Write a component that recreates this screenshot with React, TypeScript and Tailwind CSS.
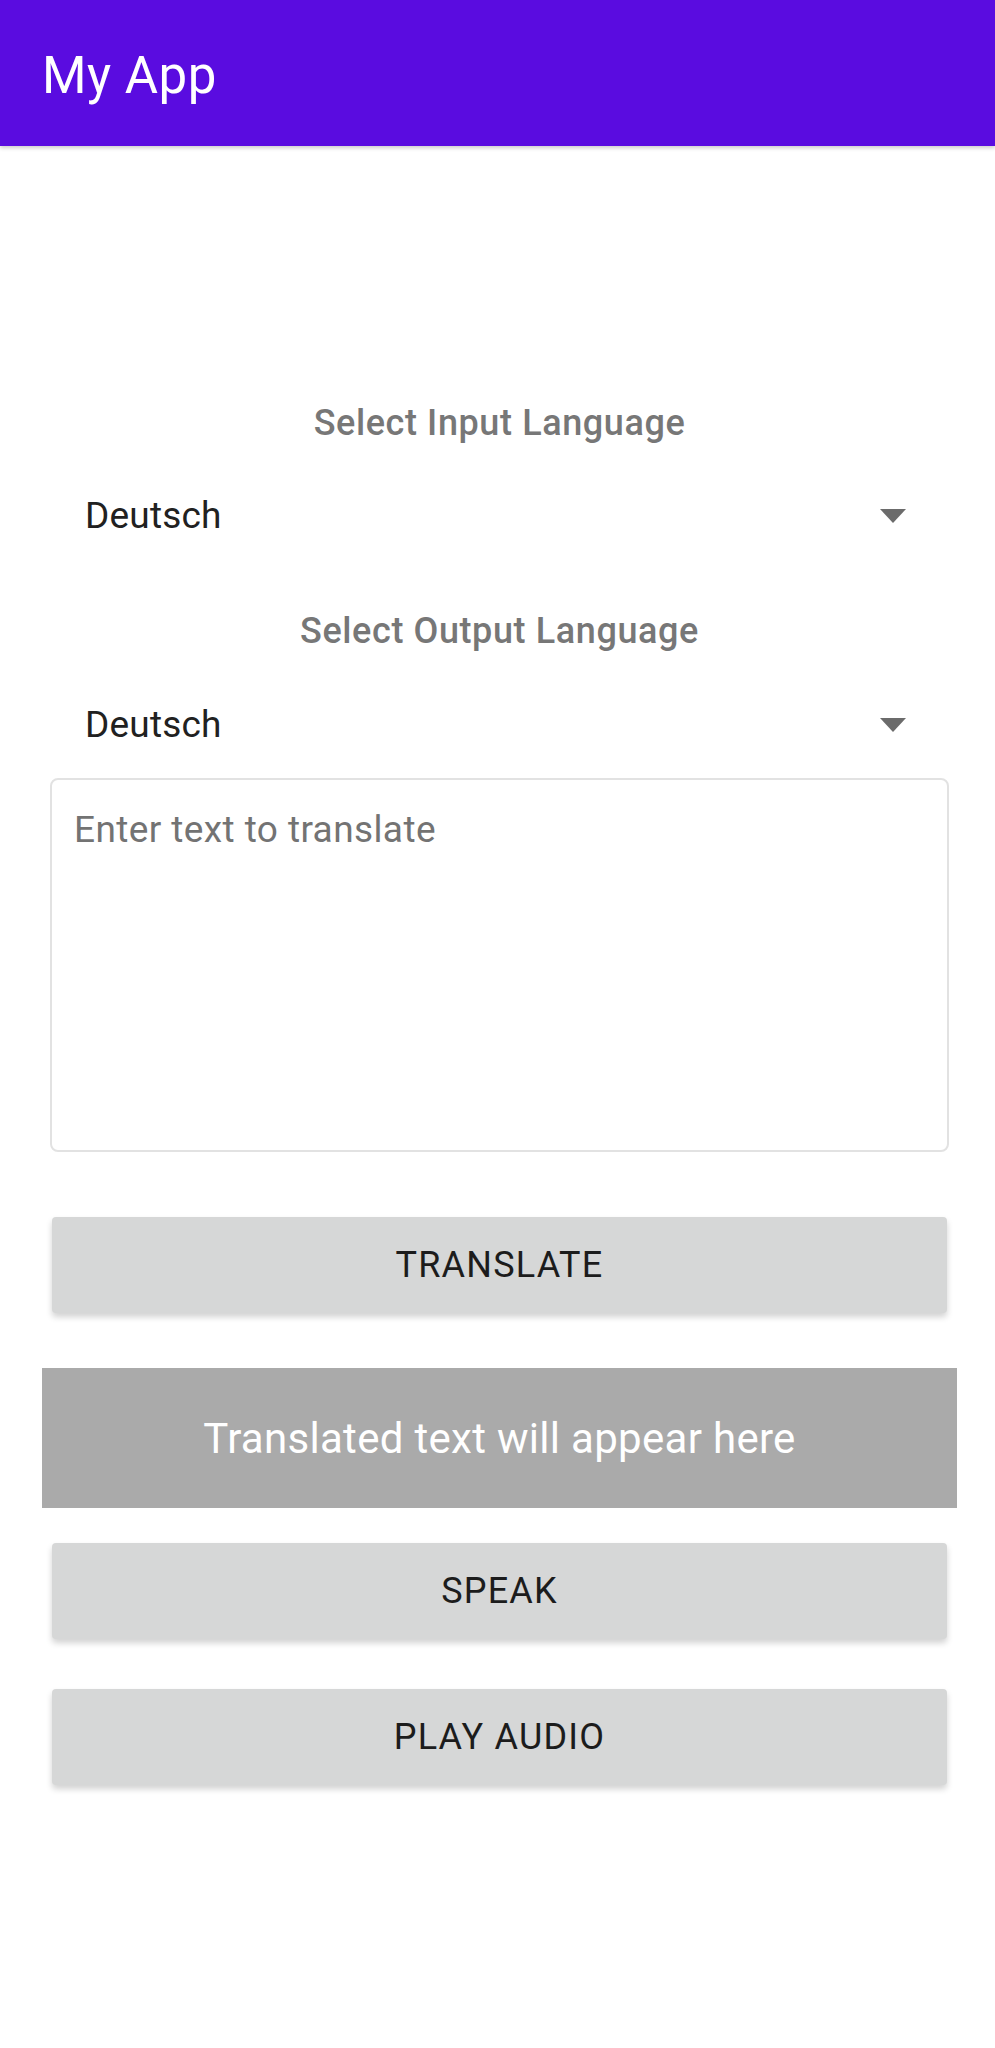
export default function App() {
  const languages = ["Deutsch", "English", "Français", "Español"];

  const LangRow = ({ value }: { value: string }) => (
    <div className="flex h-[70px] items-center justify-between pl-[35px] pr-[43px]">
      <span className="text-[37px] tracking-[0.2px] text-[#212121]">{value}</span>
      <svg width="26" height="14" viewBox="0 0 26 14">
        <path d="M0 0 L26 0 L13 14 Z" fill="#6b6b6b" />
      </svg>
    </div>
  );

  const ActionButton = ({ label }: { label: string }) => (
    <button className="mx-[2px] flex h-[96px] items-center justify-center rounded-[4px] bg-[#d6d7d7] text-[36px] tracking-[1.2px] text-[#1c1c1c] shadow-[0_4px_6px_rgba(0,0,0,0.18)]">
      {label}
    </button>
  );

  return (
    <div className="min-h-[2048px] bg-white font-['Roboto',sans-serif]">
      <header className="flex h-[146px] items-center bg-[#5a0ce0] pl-[42px] pt-[4px] shadow-[0_2px_4px_rgba(0,0,0,0.2)]">
        <h1 className="text-[51px] leading-none tracking-[0.5px] text-white">My App</h1>
      </header>

      <main className="flex flex-col pl-[50px] pr-[46px] pt-[256px]">
        <p className="h-[42px] text-center text-[36px] leading-[42px] font-medium tracking-[0.6px] text-[#777777]">
          Select Input Language
        </p>
        <div className="mt-[37px]">
          <LangRow value={languages[0]} />
        </div>

        <p className="mt-[59px] h-[42px] text-center text-[36px] leading-[42px] font-medium tracking-[0.6px] text-[#777777]">
          Select Output Language
        </p>
        <div className="mt-[38px]">
          <LangRow value={languages[0]} />
        </div>

        <textarea
          className="mt-[18px] h-[374px] resize-none rounded-[8px] border-2 border-[#e2e2e2] px-[22px] pt-[28px] text-[37px] leading-[44px] tracking-[0.4px] text-[#212121] outline-none placeholder:text-[#737373]"
          placeholder="Enter text to translate"
        />

        <div className="mt-[65px] flex flex-col">
          <ActionButton label="TRANSLATE" />
        </div>

        <div className="-mx-[8px] mt-[55px] flex h-[140px] items-center justify-center bg-[#aaaaaa]">
          <span className="text-[42px] tracking-[0.3px] text-white">Translated text will appear here</span>
        </div>

        <div className="mt-[35px] flex flex-col gap-[50px]">
          <ActionButton label="SPEAK" />
          <ActionButton label="PLAY AUDIO" />
        </div>
      </main>
    </div>
  );
}
